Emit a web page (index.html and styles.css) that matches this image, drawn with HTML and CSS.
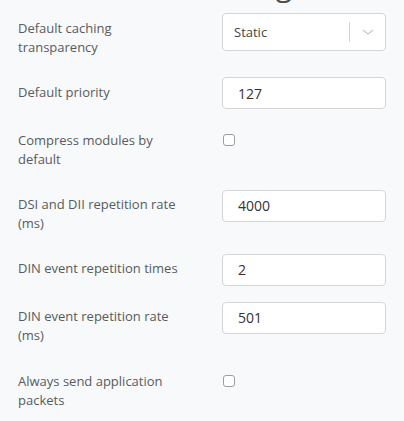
FILE: index.html
```html
<!DOCTYPE html>
<html>
<head>
<meta charset="utf-8">
<link rel="stylesheet" href="styles.css">
</head>
<body>
<div class="page">
  <div class="heading">Settings</div>
  <div class="form">
    <div class="row">
      <div class="label">Default caching transparency</div>
      <div class="control">
        <div class="select">
          <span class="select-value">Static</span>
          <span class="select-sep"></span>
          <svg class="chevron" width="12" height="6" viewBox="0 0 12 6"><path d="M1 1 L6 5 L11 1" fill="none" stroke="#c8c8c8" stroke-width="1.3"/></svg>
        </div>
      </div>
    </div>
    <div class="row">
      <div class="label">Default priority</div>
      <div class="control"><input class="text-input" type="text" value="127"></div>
    </div>
    <div class="row">
      <div class="label">Compress modules by default</div>
      <div class="control"><input class="check" type="checkbox"></div>
    </div>
    <div class="row">
      <div class="label">DSI and DII repetition rate (ms)</div>
      <div class="control"><input class="text-input" type="text" value="4000"></div>
    </div>
    <div class="row">
      <div class="label">DIN event repetition times</div>
      <div class="control"><input class="text-input" type="text" value="2"></div>
    </div>
    <div class="row">
      <div class="label">DIN event repetition rate (ms)</div>
      <div class="control"><input class="text-input" type="text" value="501"></div>
    </div>
    <div class="row">
      <div class="label">Always send application packets</div>
      <div class="control"><input class="check" type="checkbox"></div>
    </div>
  </div>
</div>
</body>
</html>
```

FILE: styles.css
```css
html, body {
  margin: 0;
  padding: 0;
  background: #f8f9fb;
  overflow: hidden;
}
body {
  font-family: "Open Sans", "DejaVu Sans", sans-serif;
  color: #575b60;
  font-size: 13px;
}
.page {
  padding: 0 18px;
}
.heading {
  font-size: 30px;
  line-height: 30px;
  height: 30px;
  margin-top: -29.6px;
  margin-left: 177px;
  color: #4a4d50;
  white-space: nowrap;
}
.form {
  margin-top: 12.6px;
  display: flex;
  flex-direction: column;
  gap: 16px;
}
.row {
  display: flex;
  align-items: flex-start;
}
.label {
  flex: 0 0 168px;
  line-height: 19px;
  padding: 5.5px 0 4.8px;
}
.control {
  margin-left: 36px;
  width: 164px;
}
.select {
  box-sizing: border-box;
  height: 38px;
  background: #fff;
  border: 1px solid #d3d5d8;
  border-radius: 4px;
  display: flex;
  align-items: center;
  padding-left: 11px;
}
.select-value {
  flex: 1;
  color: #444;
  font-size: 13px;
}
.select-sep {
  width: 1px;
  height: 20px;
  background: #d3d5d8;
}
.chevron {
  margin: 0 11px 0 12px;
}
.text-input {
  box-sizing: border-box;
  display: block;
  width: 164px;
  height: 32px;
  margin: 0;
  background: #fff;
  border: 1px solid #d3d5d8;
  border-radius: 4px;
  padding: 0 0 0 15px;
  font-family: "Open Sans", "DejaVu Sans", sans-serif;
  font-size: 14px;
  color: #333;
  outline: none;
}
.check {
  appearance: none;
  -webkit-appearance: none;
  display: block;
  box-sizing: border-box;
  width: 12px;
  height: 12px;
  margin: 9px 0 0 1px;
  background: #fff;
  border: 1px solid #9a9ea2;
  border-radius: 3px;
}
```
